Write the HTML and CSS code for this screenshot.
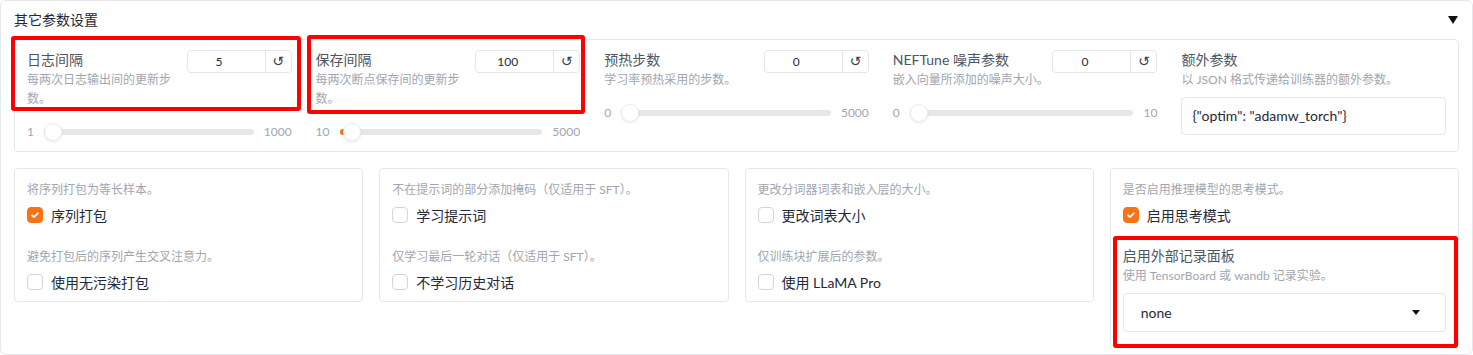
FILE: index.html
```html
<!DOCTYPE html>
<html lang="zh">
<head>
    <meta charset="UTF-8">
    <meta name="viewport" content="width=device-width, initial-scale=1.0">
    <title>其它参数设置</title>
    <link rel="stylesheet" href="styles.css">
</head>
<body>
    <div class="page">
        <section class="panel">
            <div class="panel-head">
                <span class="panel-title">其它参数设置</span>
                <span class="caret"></span>
            </div>

            <div class="param-row">
                <div class="param">
                    <div class="param-top">
                        <div class="param-text">
                            <div class="param-label">日志间隔</div>
                            <div class="param-info">每两次日志输出间的更新步数。</div>
                        </div>
                        <div class="num-box"><span class="num-value">5</span><span class="num-reset">↺</span></div>
                    </div>
                    <div class="slider">
                        <span class="slider-end">1</span>
                        <div class="track"><div class="fill" style="width:9px"></div><div class="thumb" style="left:0px"></div></div>
                        <span class="slider-end">1000</span>
                    </div>
                </div>

                <div class="param">
                    <div class="param-top">
                        <div class="param-text">
                            <div class="param-label">保存间隔</div>
                            <div class="param-info">每两次断点保存间的更新步数。</div>
                        </div>
                        <div class="num-box"><span class="num-value">100</span><span class="num-reset">↺</span></div>
                    </div>
                    <div class="slider">
                        <span class="slider-end">10</span>
                        <div class="track"><div class="fill" style="width:12px"></div><div class="thumb" style="left:3px"></div></div>
                        <span class="slider-end">5000</span>
                    </div>
                </div>

                <div class="param">
                    <div class="param-top">
                        <div class="param-text">
                            <div class="param-label">预热步数</div>
                            <div class="param-info">学习率预热采用的步数。</div>
                        </div>
                        <div class="num-box"><span class="num-value">0</span><span class="num-reset">↺</span></div>
                    </div>
                    <div class="slider">
                        <span class="slider-end">0</span>
                        <div class="track"><div class="thumb" style="left:0px"></div></div>
                        <span class="slider-end">5000</span>
                    </div>
                </div>

                <div class="param">
                    <div class="param-top">
                        <div class="param-text">
                            <div class="param-label">NEFTune 噪声参数</div>
                            <div class="param-info">嵌入向量所添加的噪声大小。</div>
                        </div>
                        <div class="num-box"><span class="num-value">0</span><span class="num-reset">↺</span></div>
                    </div>
                    <div class="slider">
                        <span class="slider-end">0</span>
                        <div class="track"><div class="thumb" style="left:0px"></div></div>
                        <span class="slider-end">10</span>
                    </div>
                </div>

                <div class="param">
                    <div class="param-label">额外参数</div>
                    <div class="param-info">以 JSON 格式传递给训练器的额外参数。</div>
                    <div class="json-box">{"optim": "adamw_torch"}</div>
                </div>
            </div>

            <div class="check-row">
                <div class="card">
                    <div class="check-group">
                        <div class="check-info">将序列打包为等长样本。</div>
                        <div class="check"><span class="box on"><svg viewBox="0 0 16 16"><path d="M4.6 8.3l2.2 2.2 4.6-4.7"/></svg></span>序列打包</div>
                    </div>
                    <div class="check-group">
                        <div class="check-info">避免打包后的序列产生交叉注意力。</div>
                        <div class="check"><span class="box"></span>使用无污染打包</div>
                    </div>
                </div>

                <div class="card">
                    <div class="check-group">
                        <div class="check-info">不在提示词的部分添加掩码（仅适用于 SFT）。</div>
                        <div class="check"><span class="box"></span>学习提示词</div>
                    </div>
                    <div class="check-group">
                        <div class="check-info">仅学习最后一轮对话（仅适用于 SFT）。</div>
                        <div class="check"><span class="box"></span>不学习历史对话</div>
                    </div>
                </div>

                <div class="card">
                    <div class="check-group">
                        <div class="check-info">更改分词器词表和嵌入层的大小。</div>
                        <div class="check"><span class="box"></span>更改词表大小</div>
                    </div>
                    <div class="check-group">
                        <div class="check-info">仅训练块扩展后的参数。</div>
                        <div class="check"><span class="box"></span>使用 LLaMA Pro</div>
                    </div>
                </div>

                <div class="card card-last">
                    <div class="check-group">
                        <div class="check-info">是否启用推理模型的思考模式。</div>
                        <div class="check"><span class="box on"><svg viewBox="0 0 16 16"><path d="M4.6 8.3l2.2 2.2 4.6-4.7"/></svg></span>启用思考模式</div>
                    </div>
                    <div class="logger">
                        <div class="param-label">启用外部记录面板</div>
                        <div class="logger-info">使用 TensorBoard 或 wandb 记录实验。</div>
                        <div class="select"><span>none</span><span class="select-arrow"></span></div>
                    </div>
                </div>
            </div>
        </section>

        <!-- highlight marks over the screenshot -->
        <div class="mark mark-log"></div>
        <div class="mark mark-save"></div>
        <div class="mark mark-logger"></div>
    </div>
</body>
</html>
```

FILE: styles.css
```css
body {
    margin: 0;
    background: #fff;
    font-family: Lato, "Noto Sans CJK SC", sans-serif;
}
.page {
    position: relative;
    width: 1473px;
    height: 355px;
}
.panel {
    box-sizing: border-box;
    height: 355px;
    border: 1px solid #e5e7eb;
    border-radius: 6px;
    padding: 0 13px;
}
.panel-head {
    height: 38px;
    display: flex;
    align-items: center;
    justify-content: space-between;
}
.panel-title {
    font-size: 14px;
    line-height: 20px;
    color: #1f2937;
}
.caret {
    width: 0;
    height: 0;
    border-left: 5px solid transparent;
    border-right: 5px solid transparent;
    border-top: 8px solid #111;
    margin-right: 1px;
}

/* top row with sliders */
.param-row {
    display: grid;
    grid-template-columns: repeat(5, 1fr);
    height: 113px;
    box-sizing: border-box;
    border: 1px solid #e5e7eb;
    border-radius: 4px;
}
.param {
    padding: 10px 12px 0;
    min-width: 0;
}
.param-top {
    display: flex;
    align-items: flex-start;
}
.param-text {
    flex: 1;
    min-width: 0;
}
.param-label {
    font-size: 14px;
    line-height: 20px;
    color: #4b5563;
}
.param-info {
    font-size: 12px;
    line-height: 19px;
    color: #a1a6ae;
}
.num-box {
    width: 105px;
    height: 23px;
    box-sizing: border-box;
    display: flex;
    border: 1px solid #e5e7eb;
    border-radius: 4px;
}
.num-value {
    flex: 1;
    text-align: center;
    padding-right: 14px;
    font-size: 12px;
    line-height: 21px;
    color: #1f2937;
}
.num-reset {
    width: 25px;
    border-left: 1px solid #e5e7eb;
    text-align: center;
    font-family: "DejaVu Sans", sans-serif;
    font-size: 14px;
    line-height: 21px;
    color: #374151;
}
.slider {
    display: flex;
    align-items: center;
    gap: 10px;
    height: 20px;
    margin-top: 14px;
}
.slider-end {
    font-size: 12px;
    line-height: 20px;
    color: #a1a6ae;
}
.track {
    flex: 1;
    position: relative;
    height: 6px;
    background: #e5e7eb;
    border-radius: 3px;
}
.fill {
    position: absolute;
    left: 0;
    top: 0;
    bottom: 0;
    background: #f97316;
    border-radius: 3px;
}
.thumb {
    position: absolute;
    top: 50%;
    width: 18px;
    height: 18px;
    margin-top: -9px;
    box-sizing: border-box;
    border-radius: 50%;
    background: #fff;
    border: 1px solid #eceef1;
    box-shadow: 0 1px 3px rgba(0, 0, 0, 0.1);
}
.json-box {
    margin-top: 8px;
    height: 38px;
    box-sizing: border-box;
    border: 1px solid #e5e7eb;
    border-radius: 4px;
    padding: 0 10px;
    font-size: 14px;
    line-height: 36px;
    color: #1f2937;
}

/* bottom row with checkboxes */
.check-row {
    display: grid;
    grid-template-columns: repeat(4, 1fr);
    gap: 16px;
    margin-top: 16px;
    align-items: start;
}
.card {
    border: 1px solid #e5e7eb;
    border-radius: 4px;
    padding: 11px 12px 9px;
}
.card-last {
    padding-bottom: 13px;
}
.check-group + .check-group {
    margin-top: 22px;
}
.check-info {
    font-size: 12px;
    line-height: 19px;
    color: #a1a6ae;
}
.check {
    display: flex;
    align-items: center;
    gap: 8px;
    height: 20px;
    margin-top: 6px;
    font-size: 14px;
    color: #1f2937;
}
.box {
    width: 16px;
    height: 16px;
    box-sizing: border-box;
    border: 1px solid #d1d5db;
    border-radius: 4px;
    background: #fff;
}
.box.on {
    background: #f97316;
    border-color: #f97316;
}
.box svg {
    display: block;
    width: 14px;
    height: 14px;
}
.box svg path {
    fill: none;
    stroke: #fff;
    stroke-width: 2;
    stroke-linecap: round;
    stroke-linejoin: round;
}
.logger {
    margin-top: 21px;
}
.logger-info {
    font-size: 12px;
    line-height: 20px;
    color: #a1a6ae;
}
.select {
    margin-top: 7px;
    height: 39px;
    box-sizing: border-box;
    border: 1px solid #e5e7eb;
    border-radius: 4px;
    display: flex;
    align-items: center;
    justify-content: space-between;
    padding: 0 25px 0 17px;
    font-size: 14px;
    color: #1f2937;
}
.select-arrow {
    width: 0;
    height: 0;
    border-left: 4px solid transparent;
    border-right: 4px solid transparent;
    border-top: 5px solid #111;
}

/* red highlight frames */
.mark {
    position: absolute;
    box-sizing: border-box;
    border: 4px solid #ff0000;
    border-radius: 3px;
}
.mark-log {
    left: 11px;
    top: 36px;
    width: 290px;
    height: 75px;
}
.mark-save {
    left: 307px;
    top: 35px;
    width: 278px;
    height: 79px;
}
.mark-logger {
    left: 1113px;
    top: 236px;
    width: 345px;
    height: 112px;
}
```
